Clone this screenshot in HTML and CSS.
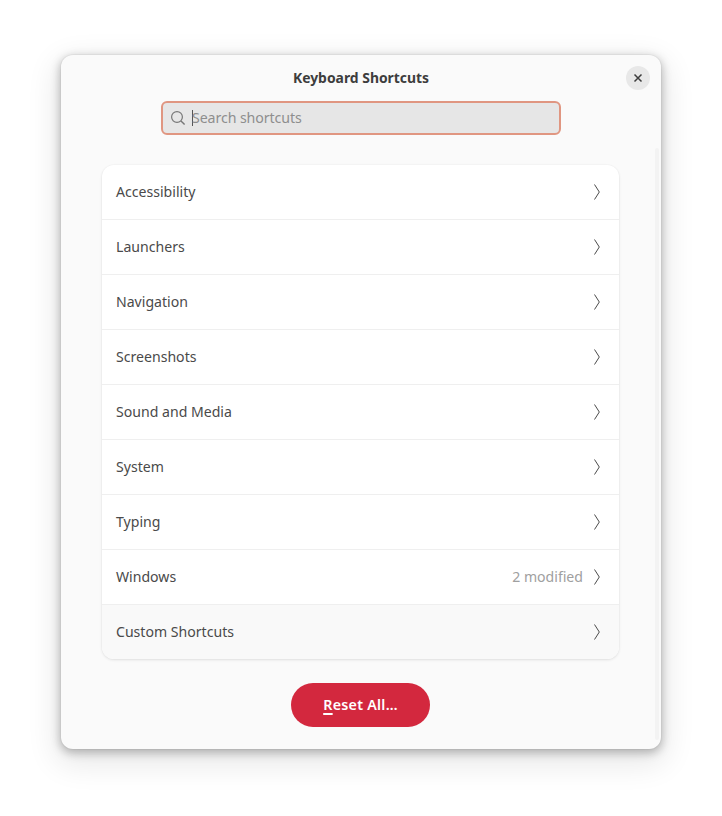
FILE: index.html
```html
<!DOCTYPE html>
<html lang="en">
<head>
<meta charset="utf-8">
<title>Keyboard Shortcuts</title>
<link rel="stylesheet" href="styles.css">
</head>
<body>
<main class="dialog">
  <header class="header">
    <h1 class="title">Keyboard Shortcuts</h1>
    <button class="close" aria-label="Close">
      <svg width="16" height="16" viewBox="0 0 16 16"><path d="M4.5 4.5l7 7M11.5 4.5l-7 7" fill="none" stroke="#3d3d3d" stroke-width="1.5"/></svg>
    </button>
  </header>
  <div class="search">
    <svg class="search-icon" width="16" height="16" viewBox="0 0 16 16"><circle cx="7" cy="7" r="5.4" fill="none" stroke="#777" stroke-width="1.2"/><path d="M11 11l3.6 3.6" fill="none" stroke="#777" stroke-width="1.4"/></svg>
    <span class="caret"></span>
    <span class="placeholder">Search shortcuts</span>
  </div>
  <div class="scroll-track"></div>
  <ul class="list">
    <li class="row"><span class="label">Accessibility</span><svg class="chev" width="8" height="16" viewBox="0 0 8 16"><path d="M1.5 .5l4.8 7.5-4.8 7.5" fill="none" stroke="#4a4a4a" stroke-width="1"/></svg></li>
    <li class="row"><span class="label">Launchers</span><svg class="chev" width="8" height="16" viewBox="0 0 8 16"><path d="M1.5 .5l4.8 7.5-4.8 7.5" fill="none" stroke="#4a4a4a" stroke-width="1"/></svg></li>
    <li class="row"><span class="label">Navigation</span><svg class="chev" width="8" height="16" viewBox="0 0 8 16"><path d="M1.5 .5l4.8 7.5-4.8 7.5" fill="none" stroke="#4a4a4a" stroke-width="1"/></svg></li>
    <li class="row"><span class="label">Screenshots</span><svg class="chev" width="8" height="16" viewBox="0 0 8 16"><path d="M1.5 .5l4.8 7.5-4.8 7.5" fill="none" stroke="#4a4a4a" stroke-width="1"/></svg></li>
    <li class="row"><span class="label">Sound and Media</span><svg class="chev" width="8" height="16" viewBox="0 0 8 16"><path d="M1.5 .5l4.8 7.5-4.8 7.5" fill="none" stroke="#4a4a4a" stroke-width="1"/></svg></li>
    <li class="row"><span class="label">System</span><svg class="chev" width="8" height="16" viewBox="0 0 8 16"><path d="M1.5 .5l4.8 7.5-4.8 7.5" fill="none" stroke="#4a4a4a" stroke-width="1"/></svg></li>
    <li class="row"><span class="label">Typing</span><svg class="chev" width="8" height="16" viewBox="0 0 8 16"><path d="M1.5 .5l4.8 7.5-4.8 7.5" fill="none" stroke="#4a4a4a" stroke-width="1"/></svg></li>
    <li class="row"><span class="label">Windows</span><span class="status">2 modified</span><svg class="chev" width="8" height="16" viewBox="0 0 8 16"><path d="M1.5 .5l4.8 7.5-4.8 7.5" fill="none" stroke="#4a4a4a" stroke-width="1"/></svg></li>
    <li class="row row-hover"><span class="label">Custom Shortcuts</span><svg class="chev" width="8" height="16" viewBox="0 0 8 16"><path d="M1.5 .5l4.8 7.5-4.8 7.5" fill="none" stroke="#4a4a4a" stroke-width="1"/></svg></li>
  </ul>
  <div class="actions">
    <button class="reset"><span class="mnemonic">R</span>eset All…</button>
  </div>
</main>
</body>
</html>
```

FILE: styles.css
```css
* { box-sizing: border-box; }
html, body { margin: 0; height: 100%; background: #fff; }
body { padding: 55px 61px 67px; font-family: "Noto Sans", "Open Sans", sans-serif; overflow: hidden; }
.dialog {
  position: relative;
  width: 600px;
  height: 694px;
  background: #fafafa;
  border-radius: 12px;
  box-shadow: 0 0 0 1px rgba(0,0,0,.03), 0 3px 10px 1px rgba(0,0,0,.26), 0 10px 30px 6px rgba(0,0,0,.09);
  display: flex;
  flex-direction: column;
  align-items: center;
}
.header { height: 46px; width: 100%; display: flex; align-items: center; justify-content: center; }
.title { margin: 0; font-size: 13.9px; font-weight: 700; color: #3d3d3d; line-height: 46px; }
.close {
  position: absolute; top: 11px; right: 11px;
  width: 24px; height: 24px; padding: 0; border: 0; border-radius: 50%;
  background: #e8e8e8; display: flex; align-items: center; justify-content: center;
}
.search {
  width: 400px; height: 34px;
  border: 2px solid #e09681; border-radius: 6px; background: #e6e6e6;
  display: flex; align-items: center; padding: 0 0 2px 7px;
}
.search-icon { flex: none; margin-top: 2px; }
.caret { width: 1px; height: 16px; background: #555; margin: 2px -1px 0 6px; }
.placeholder { font-size: 14.2px; color: #8e8e8e; letter-spacing: -.1px; }
.scroll-track {
  position: absolute; top: 93px; bottom: 9px; right: 2px; width: 4px;
  background: #f3f3f3; border-radius: 2px;
}
.list {
  list-style: none; margin: 30px 1px 0 0; padding: 0;
  width: 517px; background: #fff; border-radius: 12px; overflow: hidden;
  box-shadow: 0 0 0 1px rgba(0,0,0,.01), 0 1px 3px rgba(0,0,0,.1);
}
.row {
  height: 55px; display: flex; align-items: center; padding: 0 18px 2px 14px;
  border-bottom: 1px solid #efefef; color: #4a4a4a; font-size: 14.1px;
}
.row .chev { margin-top: 2px; }
.row:last-child { border-bottom: 0; height: 54px; }
.row-hover { background: #f9f9f9; }
.label { flex: 1; }
.status { color: #a0a0a0; margin-right: 10px; }
.chev { flex: none; }
.actions { margin: 24px 1px 0 0; }
.reset {
  width: 139px; height: 44px; border: 0; border-radius: 22px;
  background: #d3283e; color: #fff; font: 600 14.3px "Noto Sans", sans-serif; letter-spacing: .25px; padding: 0 0 2px;
}
.mnemonic { text-decoration: underline; text-decoration-thickness: 2px; text-underline-offset: 3px; }
```
